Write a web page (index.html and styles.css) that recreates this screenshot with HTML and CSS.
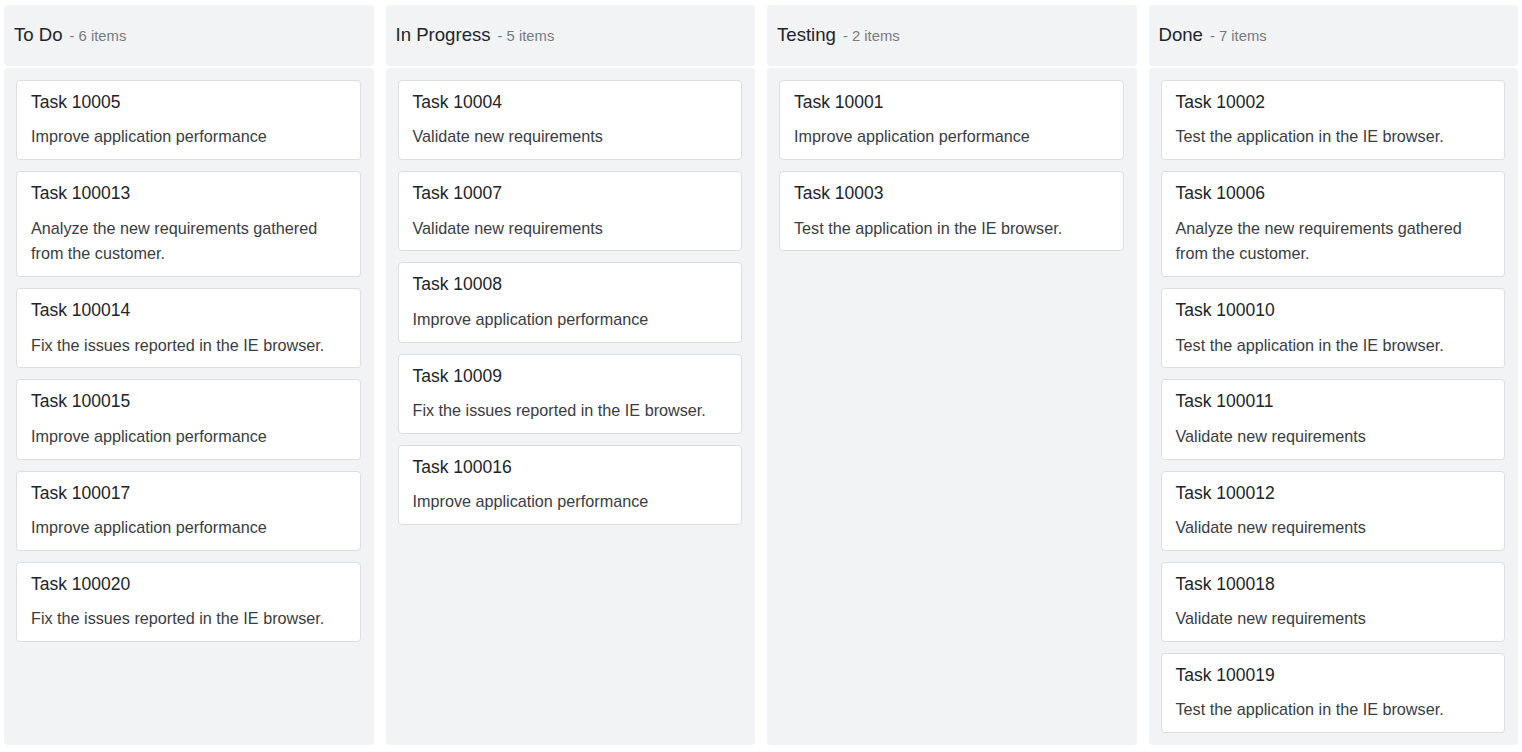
FILE: index.html
```html
<!DOCTYPE html>
<html>
<head>
<meta charset="utf-8">
<link rel="stylesheet" href="styles.css">
</head>
<body>
<div class="board">
  <div class="column">
    <div class="col-header"><span class="col-title">To Do</span><span class="col-count">- 6 items</span></div>
    <div class="col-body">
      <div class="card"><div class="card-title">Task 10005</div><div class="card-text">Improve application performance</div></div>
      <div class="card"><div class="card-title">Task 100013</div><div class="card-text">Analyze the new requirements gathered from the customer.</div></div>
      <div class="card"><div class="card-title">Task 100014</div><div class="card-text">Fix the issues reported in the IE browser.</div></div>
      <div class="card"><div class="card-title">Task 100015</div><div class="card-text">Improve application performance</div></div>
      <div class="card"><div class="card-title">Task 100017</div><div class="card-text">Improve application performance</div></div>
      <div class="card"><div class="card-title">Task 100020</div><div class="card-text">Fix the issues reported in the IE browser.</div></div>
    </div>
  </div>
  <div class="column">
    <div class="col-header"><span class="col-title">In Progress</span><span class="col-count">- 5 items</span></div>
    <div class="col-body">
      <div class="card"><div class="card-title">Task 10004</div><div class="card-text">Validate new requirements</div></div>
      <div class="card"><div class="card-title">Task 10007</div><div class="card-text">Validate new requirements</div></div>
      <div class="card"><div class="card-title">Task 10008</div><div class="card-text">Improve application performance</div></div>
      <div class="card"><div class="card-title">Task 10009</div><div class="card-text">Fix the issues reported in the IE browser.</div></div>
      <div class="card"><div class="card-title">Task 100016</div><div class="card-text">Improve application performance</div></div>
    </div>
  </div>
  <div class="column">
    <div class="col-header"><span class="col-title">Testing</span><span class="col-count">- 2 items</span></div>
    <div class="col-body">
      <div class="card"><div class="card-title">Task 10001</div><div class="card-text">Improve application performance</div></div>
      <div class="card"><div class="card-title">Task 10003</div><div class="card-text">Test the application in the IE browser.</div></div>
    </div>
  </div>
  <div class="column">
    <div class="col-header"><span class="col-title">Done</span><span class="col-count">- 7 items</span></div>
    <div class="col-body">
      <div class="card"><div class="card-title">Task 10002</div><div class="card-text">Test the application in the IE browser.</div></div>
      <div class="card"><div class="card-title">Task 10006</div><div class="card-text">Analyze the new requirements gathered from the customer.</div></div>
      <div class="card"><div class="card-title">Task 100010</div><div class="card-text">Test the application in the IE browser.</div></div>
      <div class="card"><div class="card-title">Task 100011</div><div class="card-text">Validate new requirements</div></div>
      <div class="card"><div class="card-title">Task 100012</div><div class="card-text">Validate new requirements</div></div>
      <div class="card"><div class="card-title">Task 100018</div><div class="card-text">Validate new requirements</div></div>
      <div class="card"><div class="card-title">Task 100019</div><div class="card-text">Test the application in the IE browser.</div></div>
    </div>
  </div>
</div>
</body>
</html>
```
FILE: styles.css
```css
html, body {
  margin: 0;
  padding: 0;
  background: #ffffff;
}
body {
  padding: 5px 4px 7px 4px;
  font-family: "Liberation Sans", Arial, sans-serif;
  color: #212529;
}
.board {
  display: grid;
  grid-template-columns: repeat(4, 1fr);
  column-gap: 12px;
  height: 740px;
}
.column {
  display: flex;
  flex-direction: column;
  gap: 2px;
  min-width: 0;
}
.col-header {
  height: 61px;
  box-sizing: border-box;
  background: #f2f3f5;
  border-radius: 4px;
  display: flex;
  align-items: baseline;
  padding: 19px 10px 0 10px;
}
.col-title {
  font-size: 18.6px;
  color: #212529;
}
.col-count {
  font-size: 14.8px;
  color: #777b80;
  margin-left: 7px;
}
.col-body {
  flex: 1;
  background: #f2f3f5;
  border-radius: 4px;
  padding: 12px 13px 0 12px;
  display: flex;
  flex-direction: column;
  gap: 11px;
}
.card {
  background: #ffffff;
  border: 1px solid #dddee2;
  border-radius: 4px;
  padding: 10px 14px 9px 14px;
}
.card-title {
  font-size: 17.5px;
  line-height: 22px;
  color: #212529;
  margin-bottom: 11.4px;
}
.card-text {
  font-size: 16.2px;
  line-height: 25.8px;
  color: #3a3d42;
}
```
